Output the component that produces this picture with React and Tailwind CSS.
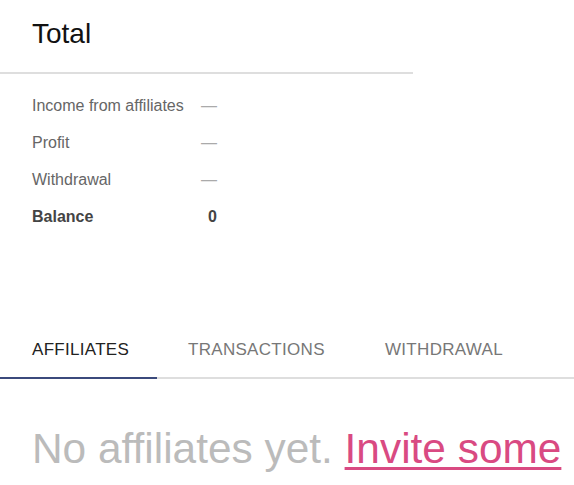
export default function App() {
  const rows = [
    { label: "Income from affiliates", value: "—" },
    { label: "Profit", value: "—" },
    { label: "Withdrawal", value: "—" },
  ];
  return (
    <div className="w-[574px] h-[485px] bg-white overflow-hidden font-['Liberation_Sans',Arial,sans-serif]">
      <div className="w-[413px] pl-[32px] pt-[18px] pb-[22px] border-b-2 border-[#dedede]">
        <div className="text-[28px] leading-[32px] text-[#111]">Total</div>
      </div>
      <div className="ml-[32px] w-[185px] mt-[13px]">
        {rows.map((r) => (
          <div key={r.label} className="flex justify-between text-[16px] leading-[37px] text-[#666]">
            <span>{r.label}</span>
            <span className="text-[#aaa]">{r.value}</span>
          </div>
        ))}
        <div className="flex justify-between text-[16px] leading-[37px] font-bold text-[#444]">
          <span>Balance</span>
          <span>0</span>
        </div>
      </div>
      <div className="mt-[88px] flex border-b-2 border-[#dedede] text-[17px] leading-[20px] tracking-[0.3px]">
        <div className="w-[157px] flex-none pl-[32px] pt-[17px] pb-[15px] -mb-[2px] border-b-2 border-[#3b4a7c] text-[#222]">
          AFFILIATES
        </div>
        <div className="w-[199px] flex-none pl-[31px] pt-[17px] pb-[17px] text-[#777]">
          TRANSACTIONS
        </div>
        <div className="flex-none pl-[29px] pt-[17px] pb-[17px] text-[#777]">
          WITHDRAWAL
        </div>
      </div>
      <div className="mt-[46px] pl-[32px] whitespace-nowrap text-[42.4px] leading-[48px] text-[#bbbbbb]">
        No affiliates yet.{" "}
        <a href="#" className="text-[#d94a82] underline decoration-[3px] underline-offset-[4px]">
          Invite some
        </a>
      </div>
    </div>
  );
}
